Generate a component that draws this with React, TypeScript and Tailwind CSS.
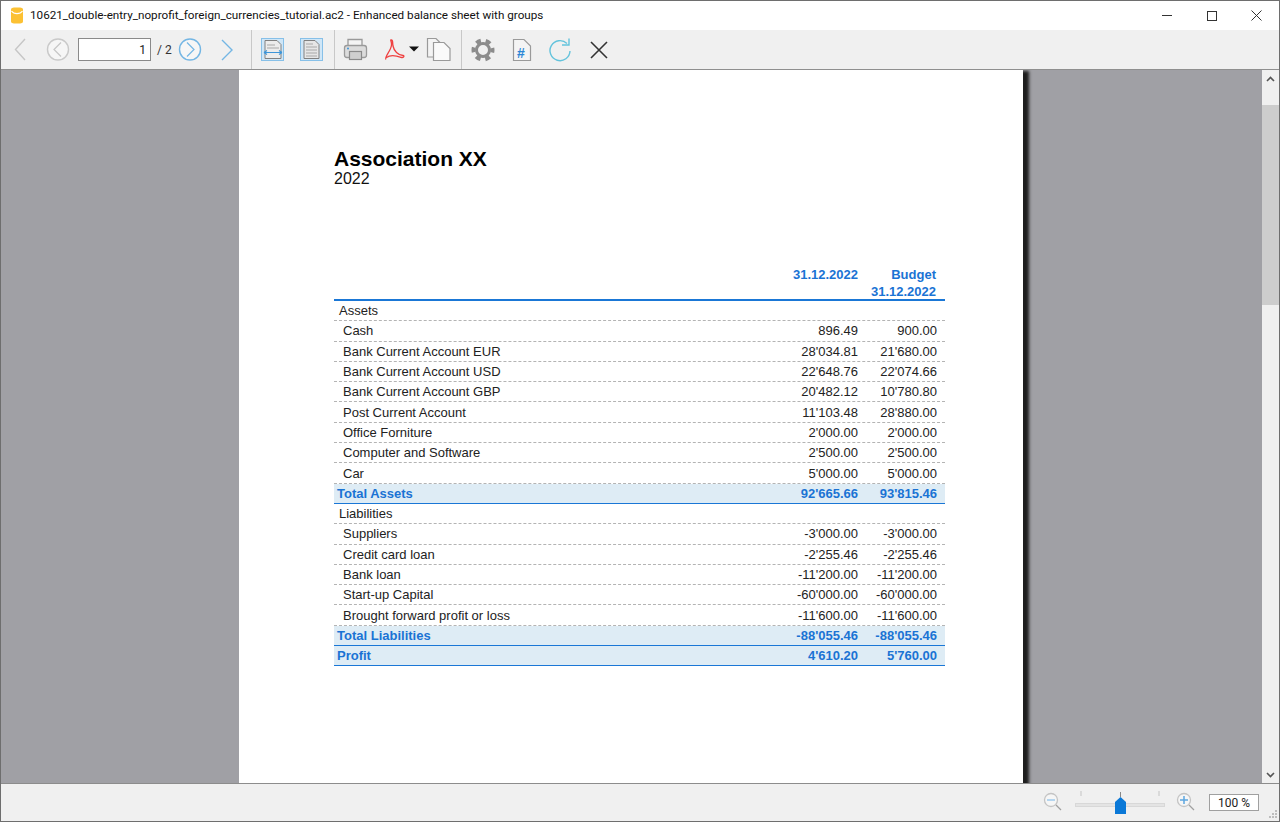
import React from 'react';

type Row = { label: string; a?: string; b?: string; kind: 'group' | 'item' | 'total' };

const ROWS: Row[] = [
  { label: 'Assets', kind: 'group' },
  { label: 'Cash', a: '896.49', b: '900.00', kind: 'item' },
  { label: 'Bank Current Account EUR', a: "28'034.81", b: "21'680.00", kind: 'item' },
  { label: 'Bank Current Account USD', a: "22'648.76", b: "22'074.66", kind: 'item' },
  { label: 'Bank Current Account GBP', a: "20'482.12", b: "10'780.80", kind: 'item' },
  { label: 'Post Current Account', a: "11'103.48", b: "28'880.00", kind: 'item' },
  { label: 'Office Forniture', a: "2'000.00", b: "2'000.00", kind: 'item' },
  { label: 'Computer and Software', a: "2'500.00", b: "2'500.00", kind: 'item' },
  { label: 'Car', a: "5'000.00", b: "5'000.00", kind: 'item' },
  { label: 'Total Assets', a: "92'665.66", b: "93'815.46", kind: 'total' },
  { label: 'Liabilities', kind: 'group' },
  { label: 'Suppliers', a: "-3'000.00", b: "-3'000.00", kind: 'item' },
  { label: 'Credit card loan', a: "-2'255.46", b: "-2'255.46", kind: 'item' },
  { label: 'Bank loan', a: "-11'200.00", b: "-11'200.00", kind: 'item' },
  { label: 'Start-up Capital', a: "-60'000.00", b: "-60'000.00", kind: 'item' },
  { label: 'Brought forward profit or loss', a: "-11'600.00", b: "-11'600.00", kind: 'item' },
  { label: 'Total Liabilities', a: "-88'055.46", b: "-88'055.46", kind: 'total' },
  { label: 'Profit', a: "4'610.20", b: "5'760.00", kind: 'total' },
];

const Sep = () => <div className="w-px h-[39px] bg-[#c8c8c8]" />;

const TopBar = () => (
  <div className="h-[39px] bg-[#f0f0f0] flex items-center shrink-0 relative font-['Roboto',sans-serif]">
    <svg width="42" height="39" className="shrink-0">
      <path d="M24 9 L14.5 19.5 L24 30" fill="none" stroke="#c6c6c6" strokeWidth="1.4" />
    </svg>
    <svg width="35" height="39" className="shrink-0">
      <circle cx="15" cy="19.5" r="10.5" fill="#f6f6f6" stroke="#c9c9c9" strokeWidth="1.4" />
      <path d="M18 12.5 L11 19.5 L18 26.5" fill="none" stroke="#c6c6c6" strokeWidth="1.2" />
    </svg>
    <div className="w-[73px] h-[23px] bg-white border border-[#8a8a8a] flex items-center justify-end pr-[4px] text-[12px] text-[#222]">1</div>
    <span className="ml-[6px] w-[21px] text-[12px] text-[#333] whitespace-nowrap">/ 2</span>
    <svg width="24" height="39" className="shrink-0">
      <circle cx="12" cy="19.5" r="10.5" fill="#f6f6f6" stroke="#74b6e4" strokeWidth="1.4" />
      <path d="M9 12.5 L16 19.5 L9 26.5" fill="none" stroke="#74b6e4" strokeWidth="1.2" />
    </svg>
    <svg width="49" height="39" className="shrink-0">
      <path d="M20 10 L30 20 L20 30" fill="none" stroke="#74b6e4" strokeWidth="1.4" />
    </svg>
    <Sep />
    <svg width="82" height="39" className="shrink-0">
      <rect x="9.5" y="8.5" width="22" height="22" fill="#cfe6f7" stroke="#87c0e8" />
      <path d="M13 10.5 H25 L29 14.5 V28.5 H13 Z" fill="#ececec" stroke="#808080" />
      <path d="M15 15 H23 M15 18 H27" stroke="#a8a8a8" />
      <path d="M12 22.5 H30 M12 22.5 L15 20.5 M12 22.5 L15 24.5 M30 22.5 L27 20.5 M30 22.5 L27 24.5" stroke="#3d95d8" strokeWidth="1.1" fill="none" />
      <rect x="48.5" y="8.5" width="22" height="22" fill="#cfe6f7" stroke="#87c0e8" />
      <path d="M52 10.5 H63 L67 14.5 V28.5 H52 Z" fill="#e6e6e6" stroke="#808080" />
      <path d="M54 14 H61 M54 17 H65 M54 20 H65 M54 23 H65 M54 26 H65" stroke="#a8a8a8" />
    </svg>
    <Sep />
    <svg width="126" height="39" className="shrink-0">
      <path d="M13 16 V9.5 H27 V16" fill="#f4f4f4" stroke="#9a9a9a" strokeWidth="1.3" />
      <rect x="9.5" y="15.5" width="22" height="12" rx="2.5" fill="#dcdcdc" stroke="#9a9a9a" strokeWidth="1.3" />
      <rect x="14.5" y="21.5" width="12" height="8" fill="#cfcfcf" stroke="#8a8a8a" strokeWidth="1.2" />
      <circle cx="13" cy="18.5" r="1" fill="#3d95d8" />
      <path d="M51 29.5 C49 27 56 21 56.5 15 C56.8 11 55 10 56 9.8 C58 9.5 57.5 13 58 16 C59 21 63 25 68 25.5 C70 26 68.5 28 66 27.3 C61 25.5 56 24 51.5 27.5" fill="none" stroke="#ef4040" strokeWidth="1.3" />
      <path d="M74 16.5 H84 L79 21.5 Z" fill="#111" />
      <path d="M92.5 27 V8.5 H101 L105 12.5 V27 Z" fill="#f4f4f4" stroke="#9a9a9a" strokeWidth="1.2" />
      <path d="M98.5 30.5 V12.5 H109 L115 18.5 V30.5 Z" fill="#fafafa" stroke="#9a9a9a" strokeWidth="1.2" />
    </svg>
    <Sep />
    <svg width="160" height="39" className="shrink-0">
      <circle cx="21" cy="20" r="6.5" fill="none" stroke="#8c8c8c" strokeWidth="3" />
      <circle cx="21" cy="20" r="9.5" fill="none" stroke="#8c8c8c" strokeWidth="4" strokeDasharray="5 4.95" strokeDashoffset="2.5" />
      <path d="M51.5 9.5 H62 L68.5 16 V30.5 H51.5 Z" fill="#f4f4f4" stroke="#9a9a9a" strokeWidth="1.2" />
      <text x="55" y="28" fontSize="14" fontWeight="700" fill="#2b86d6" fontFamily="Liberation Sans, sans-serif">#</text>
      <path d="M105 13.5 A10 10 0 1 0 108 21" fill="none" stroke="#63c3dc" strokeWidth="1.4" />
      <path d="M100 15 H107 V8.5" fill="none" stroke="#63c3dc" strokeWidth="1.4" />
      <path d="M129 12 L145 28 M145 12 L129 28" stroke="#333" strokeWidth="1.6" />
    </svg>
  </div>
);

const TableRow = ({ row }: { row: Row }) => {
  const total = row.kind === 'total';
  return (
    <div
      className={`h-[20.3px] flex items-center pr-[8px] whitespace-nowrap ${
        total
          ? 'bg-[#deecf5] border-b border-[#1a77d6] font-bold text-[#1a73d4]'
          : 'border-b border-dashed border-[#b4b4b4] text-[#222]'
      }`}
    >
      <div className={`flex-1 ${total ? 'pl-[3px]' : row.kind === 'group' ? 'pl-[5px]' : 'pl-[9px]'}`}>{row.label}</div>
      <div className="w-[90px] text-right">{row.a}</div>
      <div className="w-[79px] text-right">{row.b}</div>
    </div>
  );
};

const Page = () => (
  <div className="w-[784px] h-[760px] bg-white shadow-[7px_0_3px_-1px_#1e1e1e] shrink-0 pl-[95px] pt-[77px] pr-[78px] font-['Liberation_Sans',sans-serif]">
    <div className="text-[21px] leading-[24px] font-bold text-black">Association XX</div>
    <div className="text-[16px] leading-[16px] text-[#111]">2022</div>
    <div className="mt-[79px] text-[13px] leading-[17px]">
      <div className="flex items-start border-b-2 border-[#1a77d6] h-[35px] pr-[9px] font-bold text-[#1a73d4]">
        <div className="flex-1" />
        <div className="w-[90px] text-right">31.12.2022</div>
        <div className="w-[78px] text-right">
          <div>Budget</div>
          <div>31.12.2022</div>
        </div>
      </div>
      {ROWS.map((r) => (
        <TableRow key={r.label} row={r} />
      ))}
    </div>
  </div>
);

const Scrollbar = () => (
  <div className="w-[17px] bg-[#f0f0f0] flex flex-col shrink-0">
    <div className="h-[17px] flex items-center justify-center">
      <svg width="9" height="6"><path d="M1 5 L4.5 1.5 L8 5" fill="none" stroke="#555" strokeWidth="1.6" /></svg>
    </div>
    <div className="flex-1 pt-[18px]">
      <div className="h-[200px] bg-[#cdcdcd]" />
    </div>
    <div className="h-[17px] flex items-center justify-center">
      <svg width="9" height="6"><path d="M1 1 L4.5 4.5 L8 1" fill="none" stroke="#555" strokeWidth="1.6" /></svg>
    </div>
  </div>
);

const StatusBar = () => (
  <div className="h-[38px] bg-[#f0f0f0] border-t border-[#8c8c8c] flex items-center justify-end shrink-0 relative font-['Roboto',sans-serif]">
    <svg width="200" height="37" className="shrink-0">
      <circle cx="42" cy="16" r="6.5" fill="#f6f6f6" stroke="#c4c4c4" strokeWidth="1.3" />
      <path d="M38 16 H46" stroke="#a4cdee" strokeWidth="1.6" />
      <path d="M47 21 L52 26" stroke="#a0a0a0" strokeWidth="1.2" />
      <path d="M72 7 V12 M150 7 V12" stroke="#c4c4c4" />
      <rect x="66.5" y="19.5" width="89" height="3" fill="#e4e4e4" stroke="#d8d8d8" />
      <path d="M111.5 8 V13" stroke="#888" />
      <path d="M111.5 13 L117 18 V30 H106 V18 Z" fill="#0a78d7" />
      <circle cx="175" cy="16" r="6.5" fill="#f6f6f6" stroke="#c4c4c4" strokeWidth="1.3" />
      <path d="M171 16 H179 M175 12 V20" stroke="#5da6e0" strokeWidth="1.5" />
      <path d="M180 21 L185 26" stroke="#a0a0a0" strokeWidth="1.2" />
    </svg>
    <div className="w-[50px] h-[17px] bg-white border border-[#a0a0a0] flex items-center justify-center text-[12px] text-[#222]">100 %</div>
    <div className="w-[20px] h-full relative">
      <svg width="12" height="12" className="absolute right-[1px] bottom-[1px]">
        <path d="M9 2 h2 v2 h-2 z M6 5 h2 v2 h-2 z M9 5 h2 v2 h-2 z M3 8 h2 v2 h-2 z M6 8 h2 v2 h-2 z M9 8 h2 v2 h-2 z" fill="#bdbdbd" />
      </svg>
    </div>
  </div>
);

export default function App() {
  return (
    <div className="w-[1280px] h-[822px] border border-[#6e6e6e] flex flex-col overflow-hidden bg-white">
      <div className="h-[29px] bg-white flex items-center shrink-0 font-['Roboto',sans-serif]">
        <svg width="29" height="29" className="shrink-0">
          <path d="M10 9 C10 7 11 6.5 16 6.5 C21 6.5 22 7 22 9 V20 C22 22 21 22.5 16 22.5 C11 22.5 10 22 10 20 Z" fill="#fcc133" />
          <path d="M10.5 10 C13 13.5 19 13.5 21.5 10" fill="none" stroke="#fff" strokeWidth="1.2" />
        </svg>
        <span className="text-[11.7px] text-[#111] whitespace-nowrap">
          10621_double-entry_noprofit_foreign_currencies_tutorial.ac2 - Enhanced balance sheet with groups
        </span>
        <div className="ml-auto flex items-center">
          <div className="w-[45px] h-[29px] flex items-center justify-center">
            <div className="w-[10px] h-px bg-[#333]" />
          </div>
          <div className="w-[45px] h-[29px] flex items-center justify-center">
            <div className="w-[10px] h-[10px] border border-[#333]" />
          </div>
          <div className="w-[45px] h-[29px] flex items-center justify-center">
            <svg width="11" height="11"><path d="M0.5 0.5 L10.5 10.5 M10.5 0.5 L0.5 10.5" stroke="#333" /></svg>
          </div>
        </div>
      </div>
      <TopBar />
      <div className="h-px bg-[#8f8f8f] shrink-0" />
      <div className="flex-1 min-h-0 flex bg-[#a0a0a5] overflow-hidden">
        <div className="flex-1 pl-[238px] overflow-hidden">
          <Page />
        </div>
        <Scrollbar />
      </div>
      <StatusBar />
    </div>
  );
}
